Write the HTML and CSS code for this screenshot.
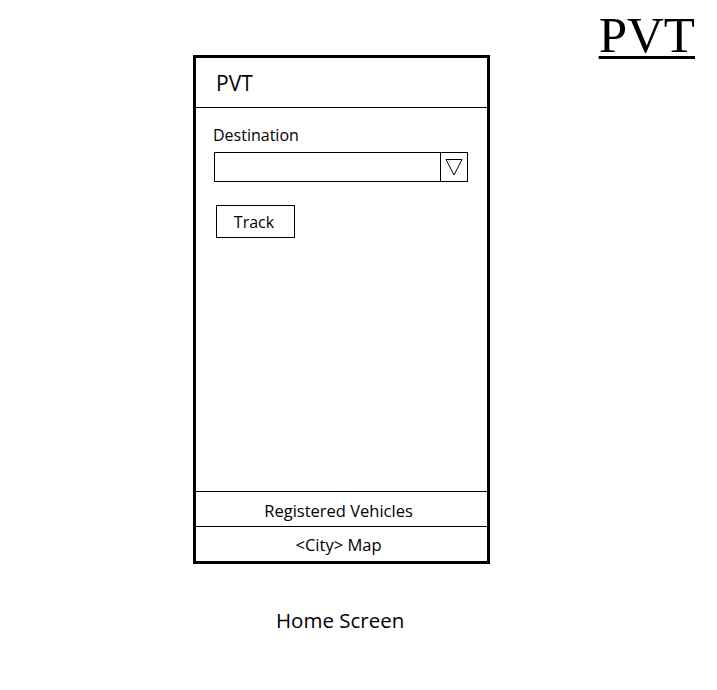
FILE: index.html
```html
<!DOCTYPE html>
<html>
<head>
<meta charset="utf-8">
<link rel="stylesheet" href="styles.css">
</head>
<body>
<div class="page">
  <div class="phone">
    <div class="app-header">PVT</div>
    <div class="app-body">
      <div class="field-label">Destination</div>
      <div class="select">
        <div class="select-value"></div>
        <div class="select-arrow">
          <svg width="18" height="18" viewBox="0 0 18 18"><polygon points="1,1.5 17,1.5 9,17" fill="none" stroke="#000" stroke-width="1"/></svg>
        </div>
      </div>
      <div class="btn">Track</div>
    </div>
    <div class="footer-row">Registered Vehicles</div>
    <div class="footer-row">&lt;City&gt; Map</div>
  </div>
  <div class="brand">PVT</div>
  <div class="caption">Home Screen</div>
</div>
</body>
</html>
```

FILE: styles.css
```css
html, body {
  margin: 0;
  padding: 0;
  background: #fff;
}
body {
  font-family: "Open Sans", "Noto Sans", sans-serif;
  color: #000;
}
.page {
  width: 717px;
  height: 690px;
  display: grid;
  grid-template-columns: 193px 297px 1fr;
  grid-template-rows: auto auto;
  align-content: start;
}
.phone {
  grid-column: 2;
  grid-row: 1;
  margin-top: 55px;
  width: 297px;
  height: 509px;
  box-sizing: border-box;
  border: 3px solid #000;
  display: flex;
  flex-direction: column;
}
.app-header {
  height: 49px;
  border-bottom: 1px solid #000;
  box-sizing: content-box;
  padding-left: 20px;
  font-size: 21px;
  line-height: 50px;
}
.app-body {
  flex: 1;
  padding: 17px 0 0 17px;
}
.field-label {
  font-size: 16px;
  line-height: 21px;
}
.select {
  margin-top: 6px;
  margin-left: 1px;
  width: 254px;
  height: 30px;
  box-sizing: border-box;
  border: 1px solid #000;
  display: flex;
}
.select-value {
  flex: 1;
}
.select-arrow {
  width: 26px;
  border-left: 1px solid #000;
  display: flex;
  align-items: center;
  justify-content: center;
}
.select-arrow svg {
  display: block;
}
.btn {
  margin-top: 23px;
  margin-left: 3px;
  width: 79px;
  height: 33px;
  box-sizing: border-box;
  border: 1px solid #000;
  display: flex;
  align-items: center;
  justify-content: center;
  font-size: 16px;
  padding-right: 3px;
}
.footer-row {
  height: 35px;
  box-sizing: border-box;
  border-top: 1px solid #000;
  padding-top: 2px;
  padding-right: 6px;
  display: flex;
  align-items: center;
  justify-content: center;
  font-size: 16.5px;
}
.footer-row:last-child {
  padding-top: 0;
}
.brand {
  grid-column: 3;
  grid-row: 1;
  justify-self: end;
  align-self: start;
  margin-right: 22px;
  margin-top: 8px;
  font-family: "Liberation Serif", "Times New Roman", serif;
  font-size: 51px;
  line-height: 54px;
  text-decoration: underline;
  text-decoration-thickness: 3px;
  text-underline-offset: 4px;
}
.caption {
  grid-column: 1 / 4;
  grid-row: 2;
  margin-top: 42px;
  margin-left: 276px;
  font-size: 20.5px;
  line-height: 28px;
}
```
